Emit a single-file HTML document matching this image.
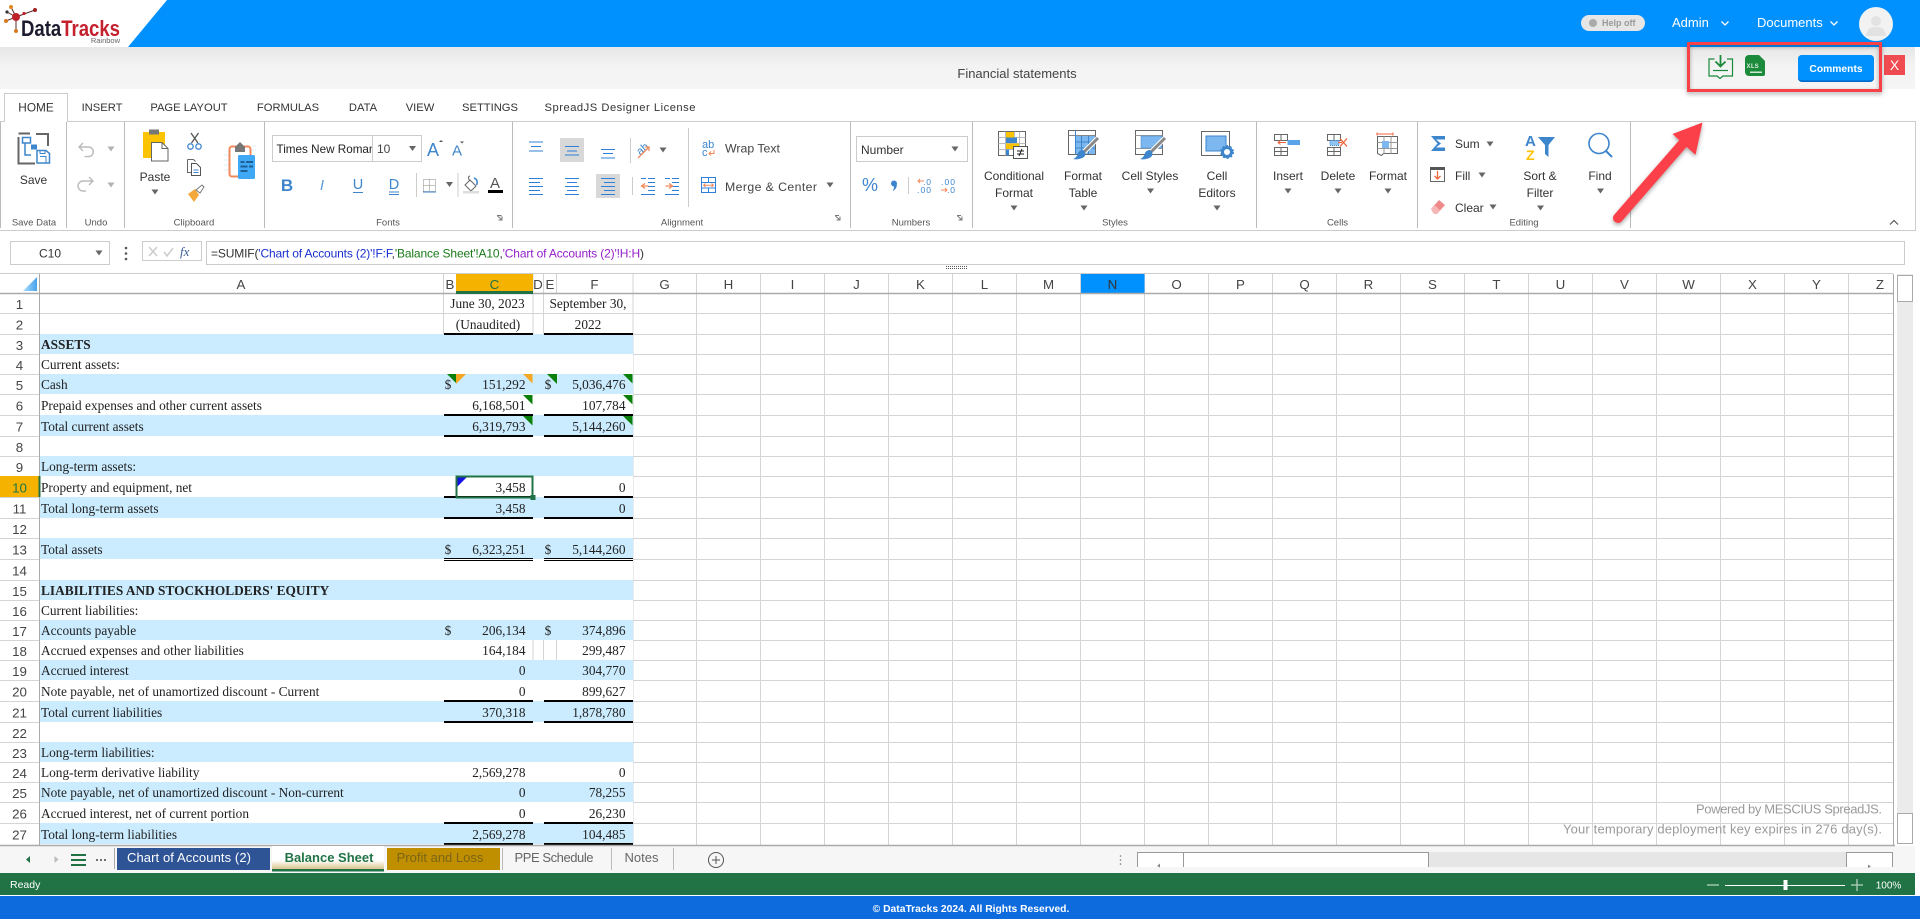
<!DOCTYPE html>
<html lang="en"><head><meta charset="utf-8"><title>Financial statements</title>
<style>
html,body{margin:0;padding:0;background:#fff;overflow:hidden;width:1920px;height:919px}
svg{display:block;font-family:"Liberation Sans",Arial,sans-serif}
text{white-space:pre}
.rb{font-size:12px;fill:#333;text-anchor:middle}
.rl{font-size:12px;fill:#333}
.gl{font-size:9.5px;fill:#555;text-anchor:middle}
.tb{font-size:11.2px;fill:#333;text-anchor:middle}
.ch{font-size:13.33px;fill:#444;text-anchor:middle}
.rh{font-size:13.33px;fill:#444;text-anchor:middle}
.c{font-family:"Liberation Serif","Times New Roman",serif;font-size:13.33px;fill:#222}
.m{text-anchor:middle}.e{text-anchor:end}
.bl{stroke:#2f80d8;fill:none;stroke-width:1}
.gy{stroke:#666;fill:none;stroke-width:1}
</style></head><body>
<svg width="1920" height="919" viewBox="0 0 1920 919" xmlns="http://www.w3.org/2000/svg">
<defs>
<path id="d" d="M-3.5-2.5h7L0 2.5z" fill="#666"/>
<linearGradient id="sg" x1="0" y1="0" x2="0" y2="1"><stop offset="0" stop-color="#e7e7e7"/><stop offset=".45" stop-color="#f3f3f3"/><stop offset="1" stop-color="#f5f5f5"/></linearGradient>
<linearGradient id="bs" x1="0" y1="0" x2="0" y2="1"><stop offset="0" stop-color="#fff"/><stop offset=".6" stop-color="#fff"/><stop offset="1" stop-color="#d3bd7f"/></linearGradient>
<linearGradient id="cn" gradientUnits="userSpaceOnUse" x1="37" y1="284" x2="23" y2="284"><stop offset="0" stop-color="#4aa3ea"/><stop offset="1" stop-color="#a8dcff"/></linearGradient>
<filter id="sh" x="-20%" y="-20%" width="140%" height="150%"><feDropShadow dx="0" dy="2" stdDeviation="2" flood-color="#000" flood-opacity=".35"/></filter>
</defs>

<!-- header -->
<rect width="1920" height="47" fill="#0091ff"/>
<path d="M0 0H167L128 47H0z" fill="#fff"/>
<g stroke="#5a2a2a" stroke-width="1" fill="none"><path d="M6 21 16 17 11 7M16 17 35 10M16 17 16 31M16 17 7 12"/></g>
<circle cx="16" cy="17" r="4" fill="#c0202a"/><circle cx="11" cy="7" r="2" fill="#e08a20"/><circle cx="35" cy="10" r="2" fill="#a02020"/><circle cx="6" cy="21" r="2" fill="#d87a20"/><circle cx="16" cy="31" r="2" fill="#d87a20"/><circle cx="7" cy="12" r="1.6" fill="#333"/><circle cx="24" cy="13.5" r="1.6" fill="#c0202a"/>
<text x="21" y="36" font-size="22.5" font-weight="700" textLength="99" lengthAdjust="spacingAndGlyphs"><tspan fill="#1c1c2e">Data</tspan><tspan fill="#c4202e">Tracks</tspan></text>
<text x="120" y="43" font-size="7.5" fill="#666" text-anchor="end">Rainbow</text>

<rect x="1581" y="15" width="64" height="16" rx="8" fill="#e6e6e6"/>
<circle cx="1593" cy="23" r="4" fill="#aaa"/>
<text x="1602" y="26" font-size="9" font-weight="700" fill="#9a9a9a">Help off</text>
<text x="1672" y="27" font-size="13" fill="#fff">Admin</text>
<path d="M1721.5 21.5l3.5 3.5 3.5-3.5" stroke="#fff" stroke-width="1.3" fill="none"/>
<text x="1757" y="27" font-size="13" fill="#fff">Documents</text>
<path d="M1830.5 21.5l3.5 3.5 3.5-3.5" stroke="#fff" stroke-width="1.3" fill="none"/>
<circle cx="1876" cy="24" r="17" fill="#f2f2f2"/>
<circle cx="1876" cy="21" r="5" fill="#e2e2e2"/><path d="M1866 36c1-8 5-9 10-9s9 1 10 9z" fill="#e2e2e2"/>

<!-- title bar -->
<rect y="47" width="1915" height="42" fill="url(#sg)"/>
<text x="1017" y="78" font-size="13" fill="#444" text-anchor="middle">Financial statements</text>

<!-- download / xls / comments -->
<g fill="none" stroke="#1b8a3a" stroke-width="1.2"><path d="M1714.5 59h-5.5v17h8l3 2.5 3-2.500h9.500V59h-5.500"/><path d="M1720.5 55v11.500M1715.500 61.500l5 5 5-5" stroke-width="1.800"/><path d="M1713 70.500h15"/></g>
<path d="M1749 55h10l6 6v13a2 2 0 0 1-2 2h-14a4 4 0 0 1-4-4V59a4 4 0 0 1 4-4z" fill="#1b8a3a"/>
<path d="M1750 71.500h12v1.500h-12z" fill="#cfe8d6"/>
<text x="1746.500" y="68" font-size="6.800" font-weight="700" fill="#cfe8d6" font-family="Liberation Mono">XLS</text>
<rect x="1798" y="55" width="76" height="27" rx="4" fill="#0068c4"/>
<rect x="1798" y="55" width="76" height="25.500" rx="4" fill="#0091ff"/>
<text x="1836" y="72" font-size="10.300" font-weight="700" fill="#fff" text-anchor="middle">Comments</text>
<rect x="1884" y="55" width="21" height="20" fill="#f04b50"/>
<text x="1894.500" y="70" font-size="14" fill="#fff" text-anchor="middle">X</text>

<!-- ribbon frame -->
<path d="M0 121.500H1915M0 230.500H1915M1915.500 121V231" stroke="#ccc" fill="none"/>
<path d="M4.500 122V93.500H67.500V122" fill="#fff" stroke="#ccc"/>
<rect x="5" y="120" width="62" height="3" fill="#fff"/>
<path d="M0.500 122V228M66.500 122V228M124.500 122V228M264.500 122V228M512.500 122V228M850.500 122V228M972.500 122V228M1256.500 122V228M1417.500 122V228M1630.500 122V228" stroke="#bbb" fill="none"/>
<text class="tb" x="36" y="111.500" style="font-size:11.800px">HOME</text>
<text class="tb" x="102" y="111">INSERT</text>
<text class="tb" x="189" y="111">PAGE LAYOUT</text>
<text class="tb" x="288" y="111">FORMULAS</text>
<text class="tb" x="363" y="111">DATA</text>
<text class="tb" x="420" y="111">VIEW</text>
<text class="tb" x="490" y="111">SETTINGS</text>
<text class="tb" x="620" y="111" textLength="151">SpreadJS Designer License</text>
<text class="gl" x="34" y="225.500">Save Data</text><text class="gl" x="96" y="225.500">Undo</text><text class="gl" x="194" y="225.500">Clipboard</text><text class="gl" x="388" y="225.500">Fonts</text><text class="gl" x="682" y="225.500">Alignment</text><text class="gl" x="911" y="225.500">Numbers</text><text class="gl" x="1115" y="225.500">Styles</text><text class="gl" x="1337.500" y="225.500">Cells</text><text class="gl" x="1524" y="225.500">Editing</text>
<path d="M497 215.500h4v1M497.500 216l4.500 4M498.500 220h3.500v-3.500" stroke="#777" fill="none"/>
<path d="M835 215.500h4M835.500 216l4.500 4M836.500 220h3.500v-3.500M957 215.500h4M957.500 216l4.500 4M958.500 220h3.500v-3.500" stroke="#777" fill="none"/>

<!-- save -->
<path d="M36 134H48V146M18.500 137V163.500H35M18.500 133.500H30" stroke="#666" stroke-width="2" fill="none"/>
<rect x="22.500" y="137.500" width="8" height="5.500" fill="#fff" stroke="#3d85cc" stroke-width="1.500"/>
<path d="M25 143v12h6M31 147h4" stroke="#3d85cc" stroke-width="1.500" fill="none"/>
<rect x="31" y="144.500" width="6" height="5" fill="#3d85cc"/>
<path d="M37 150.500h9l3.500 3v9.500H37z" fill="#fff" stroke="#3d85cc" stroke-width="1.500"/><path d="M40 156.500h6v6M40 150.500v3h5v-3" stroke="#3d85cc" fill="none"/>
<text class="rb" x="33.500" y="184">Save</text>
<!-- undo -->
<g stroke="#bbb" stroke-width="1.400" fill="none"><path d="M79 147h9.500a4.800 4.800 0 0 1 0 9.600h-4M83 143l-4 4 4 4"/><path d="M93 181H83a5 5 0 0 0 0 10h3M89 177l4 4-4 4"/></g>
<use href="#d" x="111" y="149" opacity=".5"/><use href="#d" x="111" y="185" opacity=".5"/>
<!-- paste -->
<rect x="143" y="132" width="22" height="26" fill="#fcc400"/><rect x="149" y="129.500" width="10" height="5" fill="#777"/>
<path d="M151.500 142.500h10.500l6 6v12.500h-16.500z" fill="#fff" stroke="#666"/><path d="M162 142.500v6h6" fill="none" stroke="#666"/>
<text class="rb" x="155" y="181">Paste</text><use href="#d" x="155" y="192"/>
<path d="M191.500 143L198.500 133M198 143L191 133" stroke="#555" stroke-width="1.300" fill="none"/><circle cx="190.500" cy="146.500" r="2.700" fill="none" stroke="#3d85cc" stroke-width="1.300"/><circle cx="198.500" cy="146.500" r="2.700" fill="none" stroke="#3d85cc" stroke-width="1.300"/>
<path d="M187.500 159.500h6l2 2M187.500 159.500v13h4" class="gy"/><path d="M191.500 163.500h5l4 4v8h-9z" fill="#fff" stroke="#555"/><path d="M193.500 170h5M193.500 172.500h5" stroke="#3d85cc"/>
<path d="M188 194l7-5 4 6-5 7z" fill="#f4a83c"/><path d="M196 190l6-5 2 2-4 6z" fill="none" stroke="#777"/>
<g opacity=".35" stroke="#8ecff5"><path d="M224 155h5M224 160h5M224 165h5M224 170h5M252 146h4M252 150h4"/></g>
<rect x="229.500" y="146.500" width="21" height="30" rx="2.500" fill="#fff" stroke="#f08a5d" stroke-width="2"/>
<path d="M235 152v-5l5-5 5 5v5z" fill="#777"/>
<rect x="238" y="155" width="17" height="24" rx="1.500" fill="#3fa9f5"/>
<path d="M240.500 162h4M246 162h7M240.500 166.500h7M249 166.500h4M240.500 171h7" stroke="#1e5f96" stroke-width="2"/>

<!-- fonts -->
<rect x="272.500" y="135.500" width="100" height="26" fill="#fff" stroke="#ccc"/><rect x="372.500" y="135.500" width="49" height="26" fill="#fff" stroke="#ccc"/>
<svg x="273" y="136" width="99" height="25"><text x="3.500" y="17" font-size="11.700" fill="#222">Times New Roman</text></svg>
<text x="377" y="153" font-size="12" fill="#444">10</text><use href="#d" x="412.500" y="148.500"/>
<text x="433" y="156" font-size="18" fill="#3d85cc" text-anchor="middle">A</text><path d="M439 142l2-2 2 2z" fill="#555"/>
<text x="457" y="155.500" font-size="15" fill="#3d85cc" text-anchor="middle">A</text><path d="M460 141.500h4l-2 2z" fill="#555"/>
<text x="287" y="191" font-size="17" font-weight="700" fill="#3d85cc" text-anchor="middle">B</text>
<text x="322" y="190" font-size="15" font-style="italic" fill="#5a9bd8" text-anchor="middle">I</text>
<text x="358" y="189" font-size="14.500" fill="#3d85cc" text-anchor="middle">U</text><path d="M353 192.500h10" stroke="#3d85cc"/>
<text x="394" y="189" font-size="14.500" fill="#3d85cc" text-anchor="middle">D</text><path d="M389 192h10M389 194.500h10" stroke="#3d85cc"/>
<path d="M416.500 173V197M458 173V197" stroke="#ccc"/>
<rect x="423.500" y="179.500" width="12" height="12" fill="none" stroke="#888" stroke-dasharray="1 1"/><path d="M429.500 179.500v12M423.500 185.500h12" stroke="#888" stroke-dasharray="1 1"/><path d="M423 192h13" stroke="#3d85cc"/>
<use href="#d" x="449.500" y="184.500"/>
<path d="M465 185l5-5 6 6-5 5z" fill="#fff" stroke="#666"/><path d="M470 176c-2 0-2 3 0 5" stroke="#666" fill="none"/><path d="M474 178c3 1 4 4 2.500 7" stroke="#3d85cc" stroke-width="1.500" fill="none"/><rect x="463" y="191" width="16" height="2.500" fill="#ddd"/>
<text x="495" y="188" font-size="15" fill="#555" text-anchor="middle">A</text><rect x="488" y="190" width="15" height="3" fill="#000"/>

<!-- alignment -->
<rect x="560" y="138" width="24" height="24" fill="#d8d8d8"/><rect x="596" y="174" width="24" height="24" fill="#d8d8d8"/>
<path class="bl" d="M529 142h14M531 146.500h10M529 151h14M565 146.500h14M567 151h10M565 155h14M601 149.500h14M603 153.500h10M601 158h14"/>
<path class="bl" d="M529 178.500h14M529 182.500h11M529 186.500h14M529 190.500h11M529 194.500h14M565 178.500h14M567 182.500h10M565 186.500h14M567 190.500h10M565 194.500h14M601 178.500h14M604 182.500h11M601 186.500h14M604 190.500h11M601 194.500h14"/>
<path d="M630.500 138V163M632.500 177V195M688.500 128V207" stroke="#ccc"/>
<text x="637" y="153" font-size="11" fill="#3d85cc" transform="rotate(-40 642 150)">ab</text><path d="M638 158l11-11M645 147h4v4" stroke="#f08a5d" fill="none" stroke-width="1.300"/><use href="#d" x="663" y="150"/>
<path class="bl" d="M648 178.500h7M648 182.500h7M648 186.500h7M648 190.500h7M641 194.500h14M641 178.500h5M672 178.500h7M672 182.500h7M672 186.500h7M672 190.500h7M665 194.500h14M665 178.500h5"/>
<path d="M641.500 186h7M645 183.500l-3.500 2.500 3.500 2.500M665.500 186h6.500M669 183.500l3.500 2.500-3.500 2.500" stroke="#f08a5d" fill="none" stroke-width="1.300"/>
<text x="702" y="148" font-size="11" fill="#3d85cc">ab</text><text x="702" y="156" font-size="11" fill="#3d85cc">c</text><path d="M714 150v3.500h-5M711 151.500l-2 2 2 2" stroke="#f08a5d" fill="none"/>
<text class="rl" x="725" y="152.500" style="font-size:12.300px;fill:#444">Wrap Text</text>
<rect x="701.500" y="177.500" width="14" height="15" fill="#fff" stroke="#2f80d8"/><path d="M701.500 182.500h14M701.500 188h14M708.500 177.500v5M708.500 188v5" stroke="#2f80d8"/><path d="M704 185.200h9M705.500 183.500l-2 1.700 2 1.700M711.500 183.500l2 1.700-2 1.700" stroke="#f08a5d" fill="none"/>
<text class="rl" x="725" y="191" style="font-size:12.300px;fill:#444" textLength="92">Merge &amp; Center</text><use href="#d" x="830" y="185"/>

<!-- numbers -->
<rect x="856.500" y="136.500" width="111" height="25" fill="#fff" stroke="#ccc"/>
<text x="861" y="154" font-size="12" fill="#333">Number</text><use href="#d" x="955" y="149"/>
<text x="870" y="191" font-size="18" fill="#3d85cc" text-anchor="middle">%</text>
<circle cx="894" cy="183.500" r="3" fill="#3d85cc"/><path d="M896.800 184.500c.3 3-1.800 5.500-4.300 6.800 1.200-1.700 1.700-3.200 1.400-5z" fill="#3d85cc"/>
<path d="M908.500 177V194" stroke="#ccc"/>
<text x="917" y="185" font-size="8.500" fill="#3d85cc" textLength="14">  .0</text><text x="917" y="193" font-size="8.500" fill="#3d85cc" textLength="14">.00</text>
<path d="M918 181h6M920 179l-2 2 2 2" stroke="#f08a5d" fill="none"/>
<text x="941" y="185" font-size="8.500" fill="#3d85cc" textLength="14">.00</text><text x="941" y="193" font-size="8.500" fill="#3d85cc" textLength="14">  .0</text>
<path d="M941 190h6M945 188l2 2-2 2" stroke="#f08a5d" fill="none"/>

<!-- styles -->
<g>
<rect x="998.500" y="131.500" width="27" height="24" fill="#fff" stroke="#666"/><path d="M1005.500 131.500v24M1014.500 131.500v24M1019.500 131.500v24M998.500 137.500h27M998.500 143.500h27M998.500 149.500h27" stroke="#bbb"/>
<rect x="1006" y="132" width="8" height="5.500" fill="#fcc400"/><rect x="1006" y="137.500" width="11" height="5.500" fill="#3d85cc"/><rect x="1006" y="143.500" width="13" height="5.500" fill="#fcc400"/><rect x="1006" y="149.500" width="3" height="6" fill="#3d85cc"/>
<rect x="1013.500" y="146.500" width="14" height="12" fill="#fff" stroke="#555"/><path d="M1017 151h7M1017 154h7M1019 156l3-7" stroke="#222" fill="none"/>
</g>
<text class="rb" x="1014" y="180">Conditional</text><text class="rb" x="1014" y="197">Format</text><use href="#d" x="1014" y="208"/>
<g>
<rect x="1068.500" y="130.500" width="27" height="24" fill="#fff" stroke="#666"/><path d="M1068.500 135.500h27" stroke="#888"/><rect x="1075" y="136" width="20" height="18" fill="#7db7ef"/><path d="M1081.500 136v18M1088.500 136v18M1075 142h20M1075 148h20M1075.500 130.500v24" stroke="#3d85cc"/>
<path d="M1098 138L1084 152" stroke="#fff" stroke-width="5"/><path d="M1098 138L1084 152" stroke="#888" stroke-width="3"/>
<path d="M1083 150c3 2 3 5 1 7-3 2-8 3-11 2 3-1 4-3 5-6 1-2 3-3 5-3z" fill="#3d85cc"/>
</g>
<text class="rb" x="1083" y="180">Format</text><text class="rb" x="1083" y="197">Table</text><use href="#d" x="1084" y="208"/>
<g>
<rect x="1135.500" y="130.500" width="27" height="24" fill="#fff" stroke="#666"/><path d="M1135.500 135.500h27M1135.500 148.500h27" stroke="#999"/><rect x="1141" y="136" width="21" height="12" fill="#7db7ef" stroke="#3d85cc" stroke-width=".5"/>
<path d="M1165 138L1151 152" stroke="#fff" stroke-width="5"/><path d="M1165 138L1151 152" stroke="#888" stroke-width="3"/>
<path d="M1150 150c3 2 3 5 1 7-3 2-8 3-11 2 3-1 4-3 5-6 1-2 3-3 5-3z" fill="#3d85cc"/>
</g>
<text class="rb" x="1150" y="180">Cell Styles</text><use href="#d" x="1150.500" y="191"/>
<g>
<rect x="1201.500" y="131.500" width="28" height="24" fill="#fff" stroke="#666"/><rect x="1206" y="136" width="20" height="15" fill="#7db7ef" stroke="#3d85cc"/>
<circle cx="1227" cy="152" r="4.500" fill="#fff" stroke="#3d85cc" stroke-width="3"/><circle cx="1227" cy="152" r="6.200" fill="none" stroke="#3d85cc" stroke-width="1.500" stroke-dasharray="2 2"/>
</g>
<text class="rb" x="1217" y="180">Cell</text><text class="rb" x="1217" y="197">Editors</text><use href="#d" x="1217" y="208"/>

<!-- cells -->
<path class="gy" d="M1274.500 134.500h13v6h-13zM1281 134.500v6M1274.500 147.500h13v8h-13zM1281 147.500v8M1274.500 151.500h13"/>
<path d="M1278 142.500h8M1280.500 140.500l-2.500 2 2.500 2" stroke="#f0643c" fill="none"/><rect x="1287.500" y="140" width="12.500" height="5" fill="#5aa3e8"/>
<text class="rb" x="1288" y="180">Insert</text><use href="#d" x="1288" y="191"/>
<path class="gy" d="M1327.500 134.500h13v6h-13zM1334 134.500v6M1327.500 147.500h13v8h-13zM1334 147.500v8M1327.500 151.500h13"/>
<rect x="1330" y="140.500" width="9" height="5" fill="#8ec4f2" stroke="#3d85cc" stroke-dasharray="1 1"/><path d="M1340 138.500l7 8M1347 138.500l-7 8M1338 142.500h4" stroke="#f0643c" stroke-width="1.300"/>
<text class="rb" x="1338" y="180">Delete</text><use href="#d" x="1338" y="191"/>
<path class="gy" d="M1377.500 136.500h20v17h-14l-2 2-2-1-2-1z"/><path d="M1384 136.500v17M1391 136.500v17M1377.500 142.500h20M1377.500 148.500h20" stroke="#999"/><rect x="1382" y="141" width="7" height="7" fill="#7db7ef"/><path d="M1377 134h16M1377 132.500v3M1393 132.500v3" stroke="#f0643c"/>
<text class="rb" x="1388" y="180">Format</text><use href="#d" x="1388" y="191"/>

<!-- editing -->
<path d="M1431 136h14v3.500h-9l5 4-5 4h9v3.500h-14l6.500-7.500z" fill="#3d85cc"/>
<text class="rl" x="1455" y="148">Sum</text><use href="#d" x="1490" y="144"/>
<rect x="1430.500" y="167.500" width="14" height="14" fill="#fff" stroke="#666"/><rect x="1430" y="167" width="15" height="3" fill="#555"/><path d="M1437.500 171v8M1434.500 176l3 3 3-3" stroke="#f0643c" stroke-width="1.300" fill="none"/>
<text class="rl" x="1455" y="180">Fill</text><use href="#d" x="1482" y="175"/>
<path d="M1431 209l8-9 6 5-8 9h-3z" fill="#ef8a8a"/><path d="M1431 209l3 5h3l3-3.500-5-5z" fill="#f7b6b6"/>
<text class="rl" x="1455" y="212">Clear</text><use href="#d" x="1493" y="207"/>
<text x="1525" y="146" font-size="15" font-weight="700" fill="#3d85cc">A</text><text x="1526" y="160" font-size="14" font-weight="700" fill="#fcc400">Z</text>
<path d="M1538 137h17l-6.500 8v12l-3.500-3v-9z" fill="#3d85cc"/>
<text class="rb" x="1540" y="180">Sort &amp;</text><text class="rb" x="1540" y="197">Filter</text><use href="#d" x="1540.500" y="208"/>
<circle cx="1599" cy="143.500" r="10" fill="none" stroke="#3d85cc" stroke-width="1.600"/><path d="M1606 151l6 6" stroke="#3d85cc" stroke-width="2"/>
<text class="rb" x="1600" y="180">Find</text><use href="#d" x="1600.500" y="191"/>
<path d="M1890 224.500l4-4 4 4" stroke="#555" stroke-width="1.200" fill="none"/>

<!-- formula bar -->
<rect x="10.500" y="241.500" width="99" height="23" fill="#fff" stroke="#ccc"/>
<text x="50" y="257.500" font-size="12" fill="#333" text-anchor="middle">C10</text><use href="#d" x="99" y="253"/>
<circle cx="126" cy="248" r="1.300" fill="#555"/><circle cx="126" cy="253.500" r="1.300" fill="#555"/><circle cx="126" cy="259" r="1.300" fill="#555"/>
<rect x="142.500" y="241.500" width="59" height="19" fill="#fff" stroke="#ccc"/>
<path d="M149 247l8 9M157 247l-8 9" stroke="#ccc" stroke-width="1.500"/><path d="M164 252l3 4 6-8" stroke="#ccc" stroke-width="1.500" fill="none"/>
<text x="180" y="256" font-size="13" font-style="italic" fill="#3a5f95" font-family="Liberation Serif">fx</text>
<rect x="206.500" y="241.500" width="1698" height="23" fill="#fff" stroke="#ccc"/>
<text x="211" y="257.500" font-size="12" fill="#333" textLength="433">=SUMIF(<tspan fill="#1a2fd0">'Chart of Accounts (2)'!F:F</tspan>,<tspan fill="#1a7a1a">'Balance Sheet'!A10</tspan>,<tspan fill="#9420c8">'Chart of Accounts (2)'!H:H</tspan>)</text>
<path d="M946 266.500h22M946 268.500h22" stroke="#555" stroke-dasharray="1 1"/>

<!-- sheet: grid -->
<path d="M0 273.500H1893" stroke="#ccc"/>
<path stroke="#d4d4d4" fill="none" d="M0 313.500H1893M0 334.500H1893M0 354.500H1893M0 374.500H1893M0 394.500H1893M0 415.500H1893M0 436.500H1893M0 456.500H1893M0 476.500H1893M0 497.500H1893M0 518.500H1893M0 538.500H1893M0 559.500H1893M0 580.500H1893M0 600.500H1893M0 620.500H1893M0 640.500H1893M0 660.500H1893M0 680.500H1893M0 701.500H1893M0 722.500H1893M0 742.500H1893M0 762.500H1893M0 782.500H1893M0 802.500H1893M0 823.500H1893
M443.500 274V334M533 274V334M543.500 274V334M456.500 274V293M556.500 274V293M633 274V845M696.500 274V845M760.500 274V845M824.500 274V845M888.500 274V845M952.500 274V845M1016.500 274V845M1080.500 274V845M1144.500 274V845M1208.500 274V845M1272.500 274V845M1336.500 274V845M1400.500 274V845M1464.500 274V845M1528.500 274V845M1592.500 274V845M1656.500 274V845M1720.500 274V845M1784.500 274V845M1848.500 274V845"/>
<path d="M1893.500 274V845" stroke="#aaa"/>
<!-- table fill -->
<g fill="#fff"><rect x="40" y="335" width="593" height="510"/></g>
<g fill="#cbecff">
<rect x="40" y="334" width="593" height="20"/><rect x="40" y="374" width="593" height="20"/><rect x="40" y="415" width="593" height="21"/><rect x="40" y="456" width="593" height="20"/><rect x="40" y="497" width="593" height="21"/><rect x="40" y="538" width="593" height="21"/><rect x="40" y="580" width="593" height="20"/><rect x="40" y="620" width="593" height="20"/><rect x="40" y="660" width="593" height="20"/><rect x="40" y="701" width="593" height="21"/><rect x="40" y="742" width="593" height="20"/><rect x="40" y="782" width="593" height="20"/><rect x="40" y="823" width="593" height="21"/>
</g>
<path d="M533 640V660M543.500 640V660M556.500 640V660" stroke="#d4d4d4"/>
<!-- headers highlight -->
<rect x="456" y="274" width="77" height="17" fill="#f5b300"/>
<rect x="1081" y="274" width="63.500" height="19" fill="#0091ff"/>
<rect x="0" y="476" width="38.500" height="21" fill="#f5b300"/>
<path d="M0 293.500H1893" stroke="#aaa" stroke-width="1.500"/>
<path d="M39.500 274V845" stroke="#aaa"/>
<rect x="38.500" y="476" width="2" height="21" fill="#217346"/>
<rect x="456" y="291" width="77" height="3" fill="#217346"/>
<path d="M37 277V291H23z" fill="url(#cn)"/>
<text class="ch" x="241" y="289">A</text><text class="ch" x="450" y="289">B</text><text class="ch" x="494.500" y="289" style="fill:#217346">C</text><text class="ch" x="538" y="289">D</text><text class="ch" x="550" y="289">E</text><text class="ch" x="594.500" y="289">F</text>
<text class="ch" x="664.500" y="289">G</text><text class="ch" x="728.500" y="289">H</text><text class="ch" x="792.500" y="289">I</text><text class="ch" x="856.500" y="289">J</text><text class="ch" x="920.500" y="289">K</text><text class="ch" x="984.500" y="289">L</text><text class="ch" x="1048.500" y="289">M</text><text class="ch" x="1112.500" y="289" style="fill:#333">N</text><text class="ch" x="1176.500" y="289">O</text><text class="ch" x="1240.500" y="289">P</text><text class="ch" x="1304.500" y="289">Q</text><text class="ch" x="1368.500" y="289">R</text><text class="ch" x="1432.500" y="289">S</text><text class="ch" x="1496.500" y="289">T</text><text class="ch" x="1560.500" y="289">U</text><text class="ch" x="1624.500" y="289">V</text><text class="ch" x="1688.500" y="289">W</text><text class="ch" x="1752.500" y="289">X</text><text class="ch" x="1816.500" y="289">Y</text><text class="ch" x="1880" y="289">Z</text>
<g>
<text class="rh" x="19.500" y="309">1</text><text class="rh" x="19.500" y="329.500">2</text><text class="rh" x="19.500" y="350">3</text><text class="rh" x="19.500" y="370">4</text><text class="rh" x="19.500" y="390">5</text><text class="rh" x="19.500" y="410.500">6</text><text class="rh" x="19.500" y="431.500">7</text><text class="rh" x="19.500" y="452">8</text><text class="rh" x="19.500" y="472">9</text><text class="rh" x="19.500" y="492.500" style="fill:#217346">10</text><text class="rh" x="19.500" y="513.500">11</text><text class="rh" x="19.500" y="534">12</text><text class="rh" x="19.500" y="554.500">13</text><text class="rh" x="19.500" y="575.500">14</text><text class="rh" x="19.500" y="596">15</text><text class="rh" x="19.500" y="616">16</text><text class="rh" x="19.500" y="636">17</text><text class="rh" x="19.500" y="656">18</text><text class="rh" x="19.500" y="676">19</text><text class="rh" x="19.500" y="696.500">20</text><text class="rh" x="19.500" y="717.500">21</text><text class="rh" x="19.500" y="738">22</text><text class="rh" x="19.500" y="758">23</text><text class="rh" x="19.500" y="778">24</text><text class="rh" x="19.500" y="798">25</text><text class="rh" x="19.500" y="818.500">26</text><text class="rh" x="19.500" y="839.500">27</text>
</g>
<!-- borders -->
<g fill="#000">
<rect x="444" y="333" width="89" height="2"/><rect x="544" y="333" width="89" height="2"/>
<rect x="444" y="414" width="89" height="2"/><rect x="544" y="414" width="89" height="2"/>
<rect x="444" y="435" width="89" height="2"/><rect x="544" y="435" width="89" height="2"/>
<rect x="444" y="496" width="89" height="2"/><rect x="544" y="496" width="89" height="2"/>
<rect x="444" y="517" width="89" height="2"/><rect x="544" y="517" width="89" height="2"/>
<rect x="444" y="558" width="89" height="1"/><rect x="544" y="558" width="89" height="1"/>
<rect x="444" y="560" width="89" height="1"/><rect x="544" y="560" width="89" height="1"/>
<rect x="444" y="700" width="89" height="2"/><rect x="544" y="700" width="89" height="2"/>
<rect x="444" y="721" width="89" height="2"/><rect x="544" y="721" width="89" height="2"/>
<rect x="444" y="822" width="89" height="2"/><rect x="544" y="822" width="89" height="2"/>
<rect x="444" y="843" width="89" height="2"/><rect x="544" y="843" width="89" height="2"/>
</g>
<!-- triangles -->
<path d="M447 374h9v9z" fill="#0a7f0a"/><path d="M456 374h10l-10 10z" fill="#f5a623"/><path d="M523 374h9.500v9.500z" fill="#f5a623"/><path d="M547 374h10v10z" fill="#0a7f0a"/><path d="M623 374h9.500v9.500z" fill="#0a7f0a"/>
<path d="M523 395h9.500v9.500zM623 395h9.500v9.500zM523 416h9.500v9.500zM623 416h9.500v9.500z" fill="#0a7f0a"/>
<!-- cells text -->
<g>
<text class="c m" x="487.500" y="308">June 30, 2023</text><text class="c m" x="588" y="308">September 30,</text>
<text class="c m" x="488" y="329">(Unaudited)</text><text class="c m" x="588" y="329">2022</text>
<text class="c" x="41" y="349" font-weight="700">ASSETS</text>
<text class="c" x="41" y="369">Current assets:</text>
<text class="c" x="41" y="389">Cash</text><text class="c m" x="448" y="389">$</text><text class="c e" x="525.500" y="389">151,292</text><text class="c m" x="548" y="389">$</text><text class="c e" x="625.500" y="389">5,036,476</text>
<text class="c" x="41" y="410">Prepaid expenses and other current assets</text><text class="c e" x="525.500" y="410">6,168,501</text><text class="c e" x="625.500" y="410">107,784</text>
<text class="c" x="41" y="431">Total current assets</text><text class="c e" x="525.500" y="431">6,319,793</text><text class="c e" x="625.500" y="431">5,144,260</text>
<text class="c" x="41" y="471">Long-term assets:</text>
<text class="c" x="41" y="492">Property and equipment, net</text><text class="c e" x="525.500" y="492">3,458</text><text class="c e" x="625.500" y="492">0</text>
<text class="c" x="41" y="513">Total long-term assets</text><text class="c e" x="525.500" y="513">3,458</text><text class="c e" x="625.500" y="513">0</text>
<text class="c" x="41" y="554">Total assets</text><text class="c m" x="448" y="554">$</text><text class="c e" x="525.500" y="554">6,323,251</text><text class="c m" x="548" y="554">$</text><text class="c e" x="625.500" y="554">5,144,260</text>
<text class="c" x="41" y="595" font-weight="700">LIABILITIES AND STOCKHOLDERS' EQUITY</text>
<text class="c" x="41" y="615">Current liabilities:</text>
<text class="c" x="41" y="635">Accounts payable</text><text class="c m" x="448" y="635">$</text><text class="c e" x="525.500" y="635">206,134</text><text class="c m" x="548" y="635">$</text><text class="c e" x="625.500" y="635">374,896</text>
<text class="c" x="41" y="655">Accrued expenses and other liabilities</text><text class="c e" x="525.500" y="655">164,184</text><text class="c e" x="625.500" y="655">299,487</text>
<text class="c" x="41" y="675">Accrued interest</text><text class="c e" x="525.500" y="675">0</text><text class="c e" x="625.500" y="675">304,770</text>
<text class="c" x="41" y="696">Note payable, net of unamortized discount - Current</text><text class="c e" x="525.500" y="696">0</text><text class="c e" x="625.500" y="696">899,627</text>
<text class="c" x="41" y="717">Total current liabilities</text><text class="c e" x="525.500" y="717">370,318</text><text class="c e" x="625.500" y="717">1,878,780</text>
<text class="c" x="41" y="757">Long-term liabilities:</text>
<text class="c" x="41" y="777">Long-term derivative liability</text><text class="c e" x="525.500" y="777">2,569,278</text><text class="c e" x="625.500" y="777">0</text>
<text class="c" x="41" y="797">Note payable, net of unamortized discount - Non-current</text><text class="c e" x="525.500" y="797">0</text><text class="c e" x="625.500" y="797">78,255</text>
<text class="c" x="41" y="818">Accrued interest, net of current portion</text><text class="c e" x="525.500" y="818">0</text><text class="c e" x="625.500" y="818">26,230</text>
<text class="c" x="41" y="839">Total long-term liabilities</text><text class="c e" x="525.500" y="839">2,569,278</text><text class="c e" x="625.500" y="839">104,485</text>
</g>
<!-- selection -->
<rect x="456.500" y="476.500" width="76" height="21" fill="none" stroke="#217346" stroke-width="2"/>
<path d="M457.500 477.500h9l-9 9z" fill="#1414e0"/>
<rect x="530.500" y="495" width="5" height="5" fill="#217346"/>
<!-- watermark -->
<text x="1882" y="813.500" font-size="13" fill="#9a9a9a" text-anchor="end" textLength="186">Powered by MESCIUS SpreadJS.</text>
<text x="1882" y="833.500" font-size="13" fill="#9a9a9a" text-anchor="end" textLength="319">Your temporary deployment key expires in 276 day(s).</text>
<!-- v scrollbar -->
<rect x="1897" y="274" width="16" height="570" fill="#ebebeb"/>
<rect x="1897.500" y="275.500" width="15" height="26" fill="#fff" stroke="#aaa"/>
<rect x="1897.500" y="813.500" width="15" height="30" fill="#fff" stroke="#aaa"/>
<!-- tab strip -->
<rect y="846" width="1915" height="27" fill="#f6f6f6"/>
<path d="M0 845.500H1895" stroke="#aaa" stroke-width="1.500"/>
<path d="M30 856v7l-4-3.500z" fill="#217346"/><path d="M54.500 856v7l4-3.500z" fill="#bbb"/>
<path d="M71 855h15M71 860h15M71 865h15" stroke="#217346" stroke-width="2"/>
<circle cx="97" cy="860" r="1" fill="#444"/><circle cx="101" cy="860" r="1" fill="#444"/><circle cx="105" cy="860" r="1" fill="#444"/>
<path d="M114.500 848V869" stroke="#aaa"/>
<rect x="117" y="848" width="153" height="22" fill="#2f5496"/>
<text x="189" y="862" font-size="13" fill="#fff" text-anchor="middle" textLength="124">Chart of Accounts (2)</text>
<rect x="272" y="846" width="112" height="24" fill="url(#bs)"/><rect x="272" y="869" width="112" height="2.500" fill="#217346"/>
<text x="329" y="862" font-size="13" font-weight="700" fill="#217346" text-anchor="middle">Balance Sheet</text>
<rect x="387" y="848" width="113" height="22" fill="#bf8f00"/>
<text x="440" y="862" font-size="13" fill="#7a6518" text-anchor="middle">Profit and Loss</text>
<path d="M502.500 848V870M611.500 848V870M673.500 848V870" stroke="#bbb"/>
<text x="554" y="862" font-size="13" fill="#666" text-anchor="middle" textLength="79">PPE Schedule</text>
<text x="641.500" y="862" font-size="13" fill="#666" text-anchor="middle">Notes</text>
<circle cx="716" cy="860" r="7.500" fill="none" stroke="#555"/><path d="M712 860h8M716 856v8" stroke="#555"/>
<circle cx="1120.500" cy="856" r=".8" fill="#777"/><circle cx="1120.500" cy="860" r=".8" fill="#777"/><circle cx="1120.500" cy="864" r=".8" fill="#777"/>
<rect x="1137" y="852" width="756" height="15" fill="#e6e6e6"/>
<rect x="1137.500" y="852.500" width="46" height="15" fill="#fff" stroke="#999"/><rect x="1183.500" y="852.500" width="245" height="15" fill="#fff" stroke="#999"/><rect x="1846.500" y="852.500" width="46" height="15" fill="#fff" stroke="#999"/>
<rect x="1130" y="867" width="770" height="6" fill="#f6f6f6"/>
<path d="M1160 863.500v4l-3-1.500zM1868 864.500v3.500l3-1.500z" fill="#888"/>
<!-- status -->
<rect y="873" width="1915" height="22" fill="#217346"/>
<text x="10" y="888" font-size="10.500" fill="#fff">Ready</text>
<path d="M1707 885h12" stroke="#9fc5ae" stroke-width="1.500"/>
<path d="M1725 885.500h120" stroke="#fff"/>
<rect x="1783.500" y="880" width="4" height="10" fill="#fff"/>
<path d="M1851 885h12M1857 879v12" stroke="#9fc5ae" stroke-width="1.500"/>
<text x="1888.500" y="888.500" font-size="10" fill="#fff" text-anchor="middle">100%</text>
<!-- footer -->
<rect y="896" width="1920" height="23" fill="#0d6bde"/>
<text x="971" y="912" font-size="10.300" font-weight="700" fill="#fff" text-anchor="middle">© DataTracks 2024. All Rights Reserved.</text>

<!-- annotations -->
<rect x="1688.500" y="43.500" width="192" height="47" fill="none" stroke="#f8404a" stroke-width="3" filter="url(#sh)"/>
<g filter="url(#sh)"><path d="M1618 218L1686 140" stroke="#fb4049" stroke-width="10" stroke-linecap="round"/><path d="M1702.500 122.500L1672.500 134 1695.500 155z" fill="#fb4049"/></g>
</svg>
</body></html>
